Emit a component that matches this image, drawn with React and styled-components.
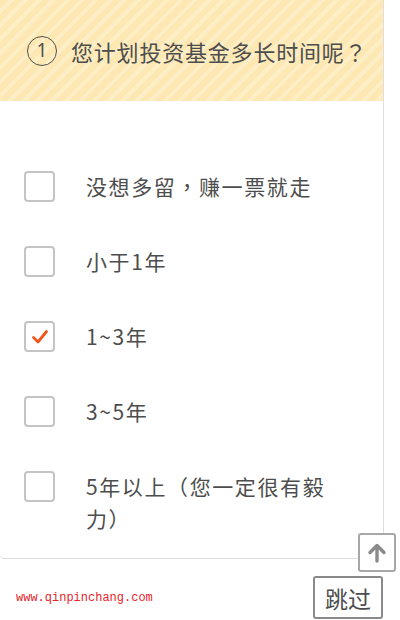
import React from "react";
import styled, { createGlobalStyle } from "styled-components";

const Global = createGlobalStyle`
  html, body { margin: 0; padding: 0; background: #fff; }
  body { font-family: "Noto Sans CJK SC", "Noto Sans", sans-serif; }
`;

const Page = styled.div`
  position: relative;
  width: 400px;
  height: 620px;
  overflow: hidden;
  display: flex;
  flex-direction: column;
`;

const Card = styled.div`
  width: 383px;
  border-right: 1px solid #dedede;
  border-bottom: 1px solid #dedede;
  border-bottom-left-radius: 4px;
  background: #fff;
  display: flex;
  flex-direction: column;
`;

const Header = styled.div`
  height: 101px;
  display: flex;
  align-items: center;
  padding-left: 27px;
  gap: 14px;
  background-color: #fde8b3;
  background-image: repeating-linear-gradient(
    135deg,
    #fde8b3 0px,
    #fde8b3 6px,
    #feeec6 6px,
    #feeec6 10px
  );
`;

const Num = styled.span`
  width: 28px;
  height: 28px;
  border: 1.8px solid #505050;
  border-radius: 50%;
  display: flex;
  align-items: center;
  justify-content: center;
  font-size: 19px;
  color: #505050;
  line-height: 1;
  font-family: "Noto Sans", sans-serif;
`;

const Title = styled.span`
  font-size: 22px;
  color: #4d4d4d;
  letter-spacing: 0.8px;
`;

const Punct = styled.span`
  font-family: "Noto Sans CJK TC", "Noto Sans CJK SC", sans-serif;
`;

const List = styled.div`
  display: flex;
  flex-direction: column;
  gap: 43px;
  padding: 69px 40px 24px 24px;
`;

const Row = styled.div`
  display: flex;
  align-items: flex-start;
  gap: 31px;
`;

const Box = styled.span`
  flex: none;
  width: 27px;
  height: 27px;
  margin-top: 1px;
  border: 2px solid #c4c4c4;
  border-radius: 4px;
  display: flex;
  align-items: center;
  justify-content: center;
`;

const Label = styled.span`
  font-size: 21px;
  line-height: 32px;
  color: #4d4d4d;
  letter-spacing: 1.6px;
`;

const Footer = styled.div`
  display: flex;
  align-items: center;
  justify-content: space-between;
  padding: 17px 17px 0 16px;
`;

const Url = styled.span`
  font-family: "Liberation Mono", monospace;
  font-size: 12px;
  color: #e8232a;
`;

const SkipButton = styled.button`
  width: 70px;
  height: 43px;
  border: 2px solid #8a8a8a;
  border-radius: 3px;
  background: #fff;
  color: #4d4d4d;
  font-family: "Noto Sans CJK SC", sans-serif;
  font-size: 23px;
  padding: 0;
  display: flex;
  align-items: center;
  justify-content: center;
`;

const UpButton = styled.button`
  position: absolute;
  left: 358px;
  top: 533px;
  width: 38px;
  height: 39px;
  border: 2px solid #a8a8a8;
  border-radius: 3px;
  background: #fff;
  padding: 0;
  display: flex;
  align-items: center;
  justify-content: center;
`;

const options = [
  { text: "没想多留，赚一票就走" },
  { text: "小于1年" },
  { text: "1~3年", checked: true },
  { text: "3~5年" },
  { text: "5年以上（您一定很有毅力）" },
];

function withPunct(text) {
  return text.split(/([，？])/).map((part, i) =>
    /^[，？]$/.test(part) ? <Punct key={i}>{part}</Punct> : part
  );
}

export default function App() {
  return (
    <>
      <Global />
      <Page>
        <Card>
          <Header>
            <Num>1</Num>
            <Title>{withPunct("您计划投资基金多长时间呢？")}</Title>
          </Header>
          <List>
            {options.map((o) => (
              <Row key={o.text}>
                <Box>
                  {o.checked && (
                    <svg width="18" height="16" viewBox="0 0 18 16">
                      <path
                        d="M2.5 8.5 L7 13 L15.5 2.5"
                        fill="none"
                        stroke="#f2561d"
                        strokeWidth="2.8"
                        strokeLinecap="round"
                        strokeLinejoin="round"
                      />
                    </svg>
                  )}
                </Box>
                <Label>{withPunct(o.text)}</Label>
              </Row>
            ))}
          </List>
        </Card>
        <Footer>
          <Url>www.qinpinchang.com</Url>
          <SkipButton>跳过</SkipButton>
        </Footer>
        <UpButton>
          <svg width="22" height="22" viewBox="0 0 22 22">
            <path
              d="M11 19 V4 M4 10.5 L11 3.5 L18 10.5"
              fill="none"
              stroke="#8a8a8a"
              strokeWidth="3.4"
              strokeLinecap="round"
              strokeLinejoin="round"
            />
          </svg>
        </UpButton>
      </Page>
    </>
  );
}
